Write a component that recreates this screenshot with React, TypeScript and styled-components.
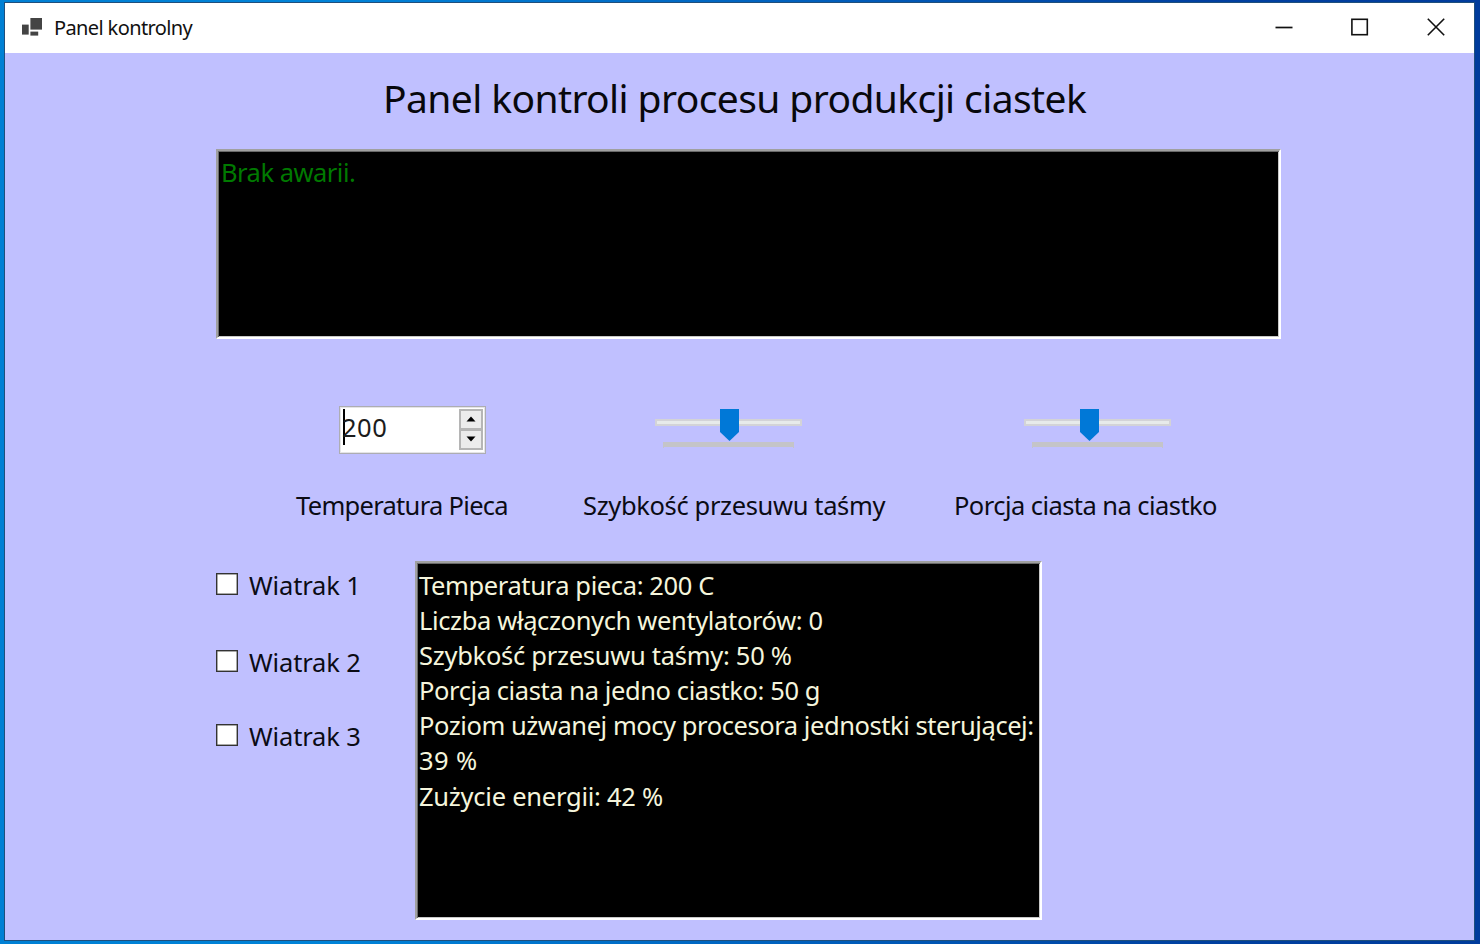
import React from 'react';
import styled, { createGlobalStyle } from 'styled-components';

const Global = createGlobalStyle`
  * { box-sizing: border-box; }
  html, body { margin: 0; padding: 0; }
  body { font-family: "Noto Sans", "Open Sans", sans-serif; color: #0b0b14; overflow: hidden; }
`;

const Desktop = styled.div`
  width: 1480px;
  height: 944px;
  padding: 2px 5px 3px 4px;
  background: linear-gradient(90deg, #0080d4 0, #0083d8 340px, #0060bd 800px, #0040a0 1200px, #003c9c 100%);
`;

const Window = styled.div`
  height: 939px;
  border: 1px solid #1f4f7c;
  background: #c0c0ff;
  display: flex;
  flex-direction: column;
`;

const TitleBar = styled.header`
  height: 50px;
  flex: none;
  background: #fff;
  display: flex;
  align-items: center;
  padding-left: 16px;
`;

const Caption = styled.span<{ $spacing: number }>`
  flex: 1;
  margin-left: 11px;
  font-size: 20px;
  line-height: 28px;
  letter-spacing: ${(p) => p.$spacing}px;
  color: #111;
`;

const WindowButtons = styled.div`
  display: flex;
  height: 50px;
`;

const WindowButton = styled.button`
  width: 76px;
  height: 48px;
  padding: 0;
  border: 0;
  background: transparent;
  display: grid;
  place-items: center;
`;

const Client = styled.main`
  flex: 1;
  display: flex;
  flex-direction: column;
`;

const Heading = styled.h1`
  margin: 18px 0 0 378px;
  height: 54px;
  font-size: 39px;
  font-weight: 400;
  line-height: 53px;
  letter-spacing: -0.6px;
  white-space: nowrap;
  color: #08080c;
`;

const Sunken = styled.section<{ $w: number; $h: number }>`
  width: ${(p) => p.$w}px;
  height: ${(p) => p.$h}px;
  flex: none;
  background: #000;
  border: 2px solid;
  border-color: #a0a0a0 #fff #fff #a0a0a0;
  box-shadow: inset 1px 1px 0 #696969, inset -1px -1px 0 #c8c8c8;
`;

const AlarmBox = styled(Sunken)`
  margin: 24px 0 0 211px;
  padding: 4px 3px;
`;

const Line = styled.div<{ $spacing: number; $color?: string }>`
  height: 35.1px;
  font-size: 25.5px;
  line-height: 35.1px;
  letter-spacing: ${(p) => p.$spacing}px;
  white-space: nowrap;
  color: ${(p) => p.$color ?? '#f5f5dc'};
`;

const Controls = styled.div`
  display: grid;
  grid-template-columns: 287px 371px 300px;
  margin: 67px 0 0 291px;
`;

const Control = styled.div<{ $indent: number }>`
  height: 82px;
  padding-left: ${(p) => p.$indent}px;
`;

const Label = styled.div<{ $spacing: number }>`
  font-size: 25.5px;
  height: 35px;
  line-height: 34px;
  letter-spacing: ${(p) => p.$spacing}px;
  white-space: nowrap;
`;

const Numeric = styled.div`
  width: 147px;
  height: 48px;
  border: 1px solid #adadb2;
  box-shadow: inset 0 0 0 1px #e4e4e6;
  background: #fff;
  display: flex;
  justify-content: space-between;
  padding: 2px 2px 0 3px;
`;

const NumericValue = styled.div`
  height: 36px;
  border-left: 2px solid #000;
  font-size: 25.5px;
  line-height: 37px;
  letter-spacing: 0.5px;
  text-indent: -3px;
  color: #1c1c1c;
`;

const Spinner = styled.div`
  width: 24px;
  height: 41px;
  background: #b5b5b5;
  padding: 2px;
  display: grid;
  gap: 3px;
`;

const SpinButton = styled.button`
  padding: 0 0 2px;
  border: 0;
  background: #ececec;
  display: grid;
  place-items: center;
`;

const Slider = styled.div`
  width: 147px;
  height: 45px;
  position: relative;
  padding-top: 13px;
`;

const Track = styled.div`
  height: 7px;
  border: 2px solid #d3d3d7;
  background: #e7eaea;
`;

const Tick = styled.div`
  width: 131px;
  height: 6px;
  margin: 16px 0 0 8px;
  border: solid #c4c4c8;
  border-width: 5px 1px 0;
`;

const Thumb = styled.svg<{ $left: number }>`
  position: absolute;
  left: ${(p) => p.$left}px;
  top: 3px;
`;

const Bottom = styled.div`
  display: flex;
  margin: 38px 0 0 211px;
`;

const Fans = styled.div`
  width: 199px;
  padding-top: 7px;
`;

const Fan = styled.label<{ $h: number }>`
  height: ${(p) => p.$h}px;
  display: flex;
  align-items: flex-start;
  gap: 11px;
`;

const Check = styled.span`
  width: 22px;
  height: 22px;
  margin-top: 5px;
  flex: none;
  background: #fff;
  border: 1.5px solid #333;
  box-shadow: inset 0 0 0 0.5px #555;
`;

const StatusBox = styled(Sunken)`
  padding: 5px 2px;
`;

const status: [string, number][] = [
  ['Temperatura pieca: 200 C', -0.38],
  ['Liczba włączonych wentylatorów: 0', -0.36],
  ['Szybkość przesuwu taśmy: 50 %', -0.28],
  ['Porcja ciasta na jedno ciastko: 50 g', -0.41],
  ['Poziom użwanej mocy procesora jednostki sterującej:', -0.44],
  ['39 %', 0.4],
  ['Zużycie energii: 42 %', -0.25],
];

const fans: [string, number][] = [
  ['Wiatrak 1', 77],
  ['Wiatrak 2', 73.5],
  ['Wiatrak 3', 40],
];

function TrackBar({ thumb }: { thumb: number }) {
  return (
    <Slider>
      <Track />
      <Tick />
      <Thumb $left={thumb} width="19" height="33" viewBox="0 0 19 33">
        <path d="M0 0H19V23L9.5 32L0 23Z" fill="#0078d7" />
      </Thumb>
    </Slider>
  );
}

export default function App() {
  return (
    <Desktop>
      <Global />
      <Window>
        <TitleBar>
          <svg width="22" height="20" viewBox="0 0 22 20">
            <g fill="#444">
              <rect x="9.4" y="-0.2" width="11.6" height="11.8" />
              <rect x="1" y="6.6" width="6.7" height="10" />
              <rect x="9.4" y="13.6" width="7.8" height="4" />
            </g>
          </svg>
          <Caption $spacing={-0.62}>Panel kontrolny</Caption>
          <WindowButtons>
            <WindowButton aria-label="Minimalizuj">
              <svg width="18" height="18"><path d="M0.5 9.5H17.5" stroke="#111" strokeWidth="1.7" /></svg>
            </WindowButton>
            <WindowButton aria-label="Maksymalizuj">
              <svg width="18" height="18"><rect x="0.9" y="1.3" width="15.4" height="15.4" fill="none" stroke="#111" strokeWidth="1.6" /></svg>
            </WindowButton>
            <WindowButton aria-label="Zamknij">
              <svg width="18" height="18"><path d="M0.8 0.8L17.2 17.2M17.2 0.8L0.8 17.2" stroke="#111" strokeWidth="1.6" /></svg>
            </WindowButton>
          </WindowButtons>
        </TitleBar>
        <Client>
          <Heading>Panel kontroli procesu produkcji ciastek</Heading>
          <AlarmBox $w={1065} $h={190}>
            <Line $spacing={-0.5} $color="#007a00">Brak awarii.</Line>
          </AlarmBox>
          <Controls>
            <div>
              <Control $indent={43}>
                <Numeric>
                  <NumericValue>200</NumericValue>
                  <Spinner>
                    <SpinButton aria-label="Więcej">
                      <svg width="10" height="6"><path d="M0.5 5.5L5 0.5L9.5 5.5Z" /></svg>
                    </SpinButton>
                    <SpinButton aria-label="Mniej">
                      <svg width="10" height="6"><path d="M0.5 0.5L5 5.5L9.5 0.5Z" /></svg>
                    </SpinButton>
                  </Spinner>
                </Numeric>
              </Control>
              <Label $spacing={-0.7}>Temperatura Pieca</Label>
            </div>
            <div>
              <Control $indent={72}><TrackBar thumb={65} /></Control>
              <Label $spacing={-0.36}>Szybkość przesuwu taśmy</Label>
            </div>
            <div>
              <Control $indent={70}><TrackBar thumb={56} /></Control>
              <Label $spacing={-0.56}>Porcja ciasta na ciastko</Label>
            </div>
          </Controls>
          <Bottom>
            <Fans>
              {fans.map(([name, h]) => (
                <Fan key={name} $h={h}>
                  <Check />
                  <Label $spacing={-0.15}>{name}</Label>
                </Fan>
              ))}
            </Fans>
            <StatusBox $w={627} $h={359}>
              {status.map(([text, spacing]) => (
                <Line key={text} $spacing={spacing}>{text}</Line>
              ))}
            </StatusBox>
          </Bottom>
        </Client>
      </Window>
    </Desktop>
  );
}
